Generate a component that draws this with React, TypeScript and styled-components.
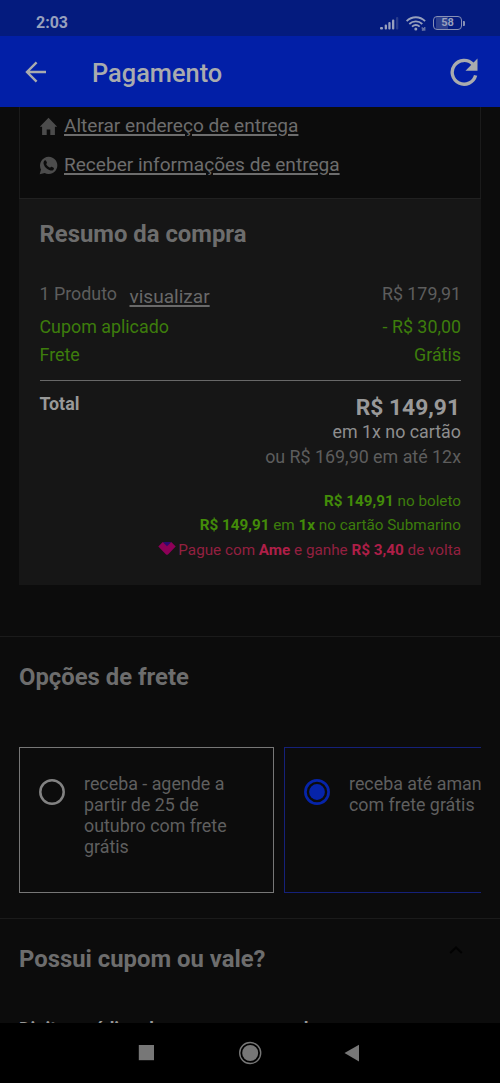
import React from 'react';
import styled, { createGlobalStyle } from 'styled-components';

const Global = createGlobalStyle`
  * { box-sizing: border-box; }
  body { margin: 0; background: #0c0c0c; font-family: Roboto, "Liberation Sans", sans-serif; }
`;

const Screen = styled.div`
  width: 500px;
  height: 1083px;
  display: flex;
  flex-direction: column;
  overflow: hidden;
  background: #0c0c0c;
  color: #6d6d6d;
`;

const StatusBar = styled.div`
  height: 36px;
  flex: none;
  display: flex;
  align-items: center;
  justify-content: space-between;
  padding: 10px 35px 0 36px;
  background: #041b7e;
  color: #97a0bd;
`;

const Clock = styled.span`
  font-size: 16px;
  line-height: 20px;
  font-weight: 700;
`;

const StatusIcons = styled.div`
  display: flex;
  align-items: center;
  gap: 7px;
`;

const Battery = styled.div`
  display: flex;
  align-items: center;
  gap: 1px;
  &::after {
    content: '';
    width: 2px;
    height: 5px;
    border-radius: 0 1px 1px 0;
    background: #8790b5;
  }
`;

const BatteryBody = styled.div`
  width: 29px;
  height: 14px;
  border: 1.5px solid #8790b5;
  border-radius: 4px;
  display: flex;
  align-items: center;
  justify-content: center;
  font-size: 11px;
  line-height: 12px;
  font-weight: 700;
  background: linear-gradient(90deg, transparent 2px, #2c3f8e 2px, #2c3f8e 14px, transparent 14px);
`;

const AppBar = styled.header`
  height: 71px;
  flex: none;
  display: flex;
  align-items: center;
  padding: 0 21px 0 25px;
  background: #021fa7;
  color: #a9abae;
`;

const Title = styled.h1`
  flex: 1;
  margin: 2px 0 0 45px;
  font-size: 25.4px;
  line-height: 32px;
  font-weight: 500;
`;

const Content = styled.main`
  flex: 1;
  min-height: 0;
  overflow: hidden;
`;

const AddressBox = styled.section`
  height: 91px;
  margin: 0 19px;
  padding: 6px 0 0 19px;
  border: 1px solid #1b1b1b;
  border-top: 0;
  border-bottom: 0;
`;

const AddressRow = styled.div`
  height: 39px;
  display: flex;
  align-items: flex-start;
  gap: 6px;
  svg { margin-top: 4px; }
`;

const Link = styled.a`
  font-size: 19.07px;
  line-height: 26px;
  text-decoration: underline;
  text-decoration-thickness: 1.5px;
  text-underline-offset: 2px;
`;

const Summary = styled.section`
  height: 387px;
  margin: 0 19px;
  padding: 20px 20px 0 20.5px;
  border-top: 1px solid #212121;
  background: #161616;
`;

const Heading = styled.h2`
  margin: 0;
  font-size: 23.85px;
  line-height: 30px;
  font-weight: 700;
`;

const Line = styled.div<{ $h: number; $green?: boolean }>`
  height: ${p => p.$h}px;
  display: flex;
  justify-content: space-between;
  align-items: flex-start;
  font-size: 17.85px;
  line-height: 24px;
  color: ${p => (p.$green ? '#3d7d0c' : '#5d5d5d')};
`;

const Lines = styled.div`
  height: 132px;
  padding-top: 33px;
  border-bottom: 1px solid #686868;
`;

const Product = styled.span`
  display: flex;
  gap: 12.5px;
`;

const ViewLink = styled(Link)`
  margin-top: 2px;
  color: #696969;
`;

const Total = styled.div`
  display: flex;
  justify-content: space-between;
  padding-top: 11px;
`;

const TotalLabel = styled.strong`
  font-size: 17.85px;
  line-height: 24px;
  color: #999;
`;

const Amounts = styled.div`
  text-align: right;
`;

const Price = styled.div`
  height: 30px;
  padding-right: 1px;
  font-size: 22.8px;
  line-height: 32px;
  font-weight: 700;
  color: #999;
`;

const Installment = styled.div<{ $muted?: boolean }>`
  font-size: 17.85px;
  line-height: ${p => (p.$muted ? 31 : 19)}px;
  color: ${p => (p.$muted ? '#5d5d5d' : '#8e8e8e')};
`;

const Deals = styled.div`
  padding-top: 16.5px;
`;

const Deal = styled.p<{ $pink?: boolean }>`
  display: flex;
  align-items: center;
  justify-content: flex-end;
  gap: 2px;
  margin: 0;
  font-size: 15.25px;
  line-height: 24.5px;
  color: ${p => (p.$pink ? '#932040' : '#3d7d0c')};
  b { color: ${p => (p.$pink ? '#ae1f48' : '#438c09')}; }
`;

const Shipping = styled.section`
  margin-top: 51px;
  height: 282px;
  padding: 25px 19px 0;
  border-top: 1px solid #1b1b1b;
`;

const Options = styled.div`
  display: flex;
  gap: 10px;
  margin-top: 55px;
  overflow: hidden;
`;

const Option = styled.label<{ $selected?: boolean }>`
  flex: none;
  width: 255px;
  height: 146px;
  display: flex;
  gap: 19px;
  padding: 25px 30px 0 19px;
  border: 1px solid ${p => (p.$selected ? '#15217a' : '#777')};
`;

const Radio = styled.svg`
  flex: none;
  width: 26px;
  height: 26px;
  margin-top: 6px;
`;

const OptionText = styled.span`
  font-size: 17.85px;
  line-height: 21px;
  white-space: pre;
  color: #5f5f5f;
`;

const Coupon = styled.section`
  padding: 25px 19px 0;
  border-top: 1px solid #1b1b1b;
`;

const CouponHead = styled.div`
  display: flex;
  justify-content: space-between;
  padding-right: 18px;
  svg { margin-top: 1px; }
`;

const CouponLabel = styled.div`
  margin-top: 43px;
  font-size: 17.85px;
  line-height: 24px;
  font-weight: 700;
  color: #999;
  white-space: nowrap;
`;

const NavBar = styled.nav`
  height: 60px;
  flex: none;
  display: flex;
  justify-content: center;
  align-items: center;
  background: #000;
`;

export default function App() {
  return (
    <>
      <Global />
      <Screen>
        <StatusBar>
          <Clock>2:03</Clock>
          <StatusIcons>
            <svg width="19" height="14" viewBox="0 0 19 14" fill="#97a0bd">
              <rect x="0" y="11" width="3" height="2.5" rx="1" />
              <rect x="4.7" y="8.5" width="2.3" height="5" rx="1" />
              <rect x="8.3" y="6" width="2.3" height="7.5" rx="1" />
              <rect x="12" y="3.5" width="2.3" height="10" rx="1" />
              <rect x="16" y="1" width="2.3" height="12.5" rx="1" opacity="0.25" />
            </svg>
            <svg width="20" height="15" viewBox="0 0 20 15" fill="none" stroke="#97a0bd" strokeWidth="1.8">
              <path d="M.6 5.2C5.8-.1 13.9-.1 19.1 5.2M3.3 8c3.8-3.6 9.2-3.6 13 0M6 10.7c2.3-2.1 5.4-2.1 7.7 0" />
              <circle cx="9.8" cy="13" r="1.5" fill="#97a0bd" stroke="none" />
              <path d="M15.5 12h1.7v2.7M15.8 14h1.4M18.8 11v3.7" strokeWidth="0.9" />
            </svg>
            <Battery>
              <BatteryBody>58</BatteryBody>
            </Battery>
          </StatusIcons>
        </StatusBar>
        <AppBar>
          <svg width="22" height="22" viewBox="0 0 22 22" fill="none" stroke="#a9abae" strokeWidth="2.4">
            <path d="M21 11H2.4M11.6 1.4 2 11l9.6 9.6" />
          </svg>
          <Title>Pagamento</Title>
          <svg width="30" height="30" viewBox="0 0 30 30">
            <path d="M26.6 18.4A11.9 11.9 0 1 1 23.800 7.2" fill="none" stroke="#a9abae" strokeWidth="3.4" />
            <path d="M28.5 1.5v12.3H16.5z" fill="#a9abae" />
          </svg>
        </AppBar>
        <Content>
          <AddressBox>
            <AddressRow>
              <svg width="19" height="19" viewBox="0 0 19 19" fill="#4c4c4c">
                <path d="M9.5 .8 .8 9.700h2.300V18h4.600v-5.600h3.600V18h4.600V9.700h2.300z" />
              </svg>
              <Link>Alterar endereço de entrega</Link>
            </AddressRow>
            <AddressRow>
              <svg width="19" height="19" viewBox="0 0 19 19">
                <path d="M9.7.8a8.6 8.6 0 1 1-4 16.2L.7 18.2l1.3-4.8A8.6 8.6 0 0 1 9.7.8Z" fill="#4c4c4c" />
                <path d="M5.6 4.400c.6-.4 1.300-.3 1.600.5l.7 1.700c.2.600-.3 1.100-.8 1.500.9 1.700 2.100 2.900 4 3.700.6-.6 1-1.300 1.600-1l1.900 1c.5.300.4 1 0 1.600-.8 1.200-2.300 1.400-3.800.9-3-1-5-3-6-5.800-.6-1.700-.2-3.200.8-4.100Z" fill="#0c0c0c" />
              </svg>
              <Link>Receber informações de entrega</Link>
            </AddressRow>
          </AddressBox>
          <Summary>
            <Heading>Resumo da compra</Heading>
            <Lines>
              <Line $h={33}>
                <Product>
                  <span>1 Produto</span>
                  <ViewLink>visualizar</ViewLink>
                </Product>
                <span>R$ 179,91</span>
              </Line>
              <Line $h={28} $green>
                <span>Cupom aplicado</span>
                <span>- R$ 30,00</span>
              </Line>
              <Line $h={28} $green>
                <span>Frete</span>
                <span>Grátis</span>
              </Line>
            </Lines>
            <Total>
              <TotalLabel>Total</TotalLabel>
              <Amounts>
                <Price>R$ 149,91</Price>
                <Installment>em 1x no cartão</Installment>
                <Installment $muted>ou R$ 169,90 em até 12x</Installment>
              </Amounts>
            </Total>
            <Deals>
              <Deal><span><b>R$ 149,91</b> no boleto</span></Deal>
              <Deal><span><b>R$ 149,91</b> em <b>1x</b> no cartão Submarino</span></Deal>
              <Deal $pink>
                <svg width="18" height="15" viewBox="0 0 18 15">
                  <path d="M4.8 0h8.400L9 5z" fill="#2c0a70" />
                  <path d="M4.800 0 9 4.200 13.200 0 17.700 4.600 10.200 12.300Q9 13.300 7.800 12.300L.3 4.600z" fill="#8d0058" />
                </svg>
                <span>Pague com <b>Ame</b> e ganhe <b>R$ 3,40</b> de volta</span>
              </Deal>
            </Deals>
          </Summary>
          <Shipping>
            <Heading>Opções de frete</Heading>
            <Options>
              <Option>
                <Radio viewBox="0 0 26 26">
                  <circle cx="13" cy="13" r="11.7" fill="none" stroke="#828282" strokeWidth="2.5" />
                </Radio>
                <OptionText>{'receba - agende a\npartir de 25 de\noutubro com frete\ngrátis'}</OptionText>
              </Option>
              <Option $selected>
                <Radio viewBox="0 0 26 26">
                  <circle cx="13" cy="13" r="11.6" fill="none" stroke="#0624a9" strokeWidth="2.7" />
                  <circle cx="13" cy="13" r="7.9" fill="#0624a9" />
                </Radio>
                <OptionText>{'receba até amanhã\ncom frete grátis'}</OptionText>
              </Option>
            </Options>
          </Shipping>
          <Coupon>
            <CouponHead>
              <Heading>Possui cupom ou vale?</Heading>
              <svg width="14" height="10" viewBox="0 0 14 10" fill="none" stroke="#020202" strokeWidth="2">
                <path d="M1.2 8 7 2.5 12.8 8" />
              </svg>
            </CouponHead>
            <CouponLabel>Digite o código do seu cupom ou vale</CouponLabel>
          </Coupon>
        </Content>
        <NavBar>
          <svg width="224" height="26" viewBox="0 0 224 26" fill="#777">
            <rect x="0.8" y="5" width="15.2" height="15.2" />
            <circle cx="112.2" cy="13" r="10.5" fill="none" stroke="#777" strokeWidth="1.4" />
            <circle cx="112.2" cy="13" r="8" />
            <path d="M221 4.8v16.6L206.5 13.1z" />
          </svg>
        </NavBar>
      </Screen>
    </>
  );
}
